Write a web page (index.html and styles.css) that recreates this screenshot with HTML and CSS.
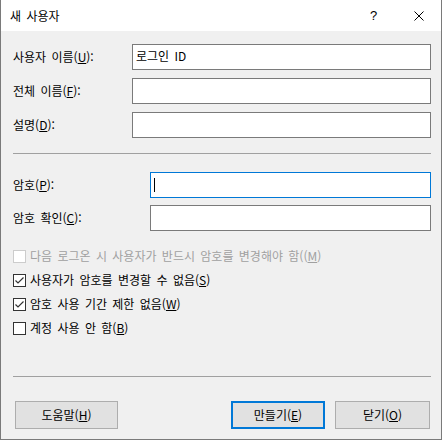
FILE: index.html
```html
<!DOCTYPE html>
<html lang="ko">
<head>
<meta charset="utf-8">
<title>새 사용자</title>
<link rel="stylesheet" href="styles.css">
</head>
<body>
<div class="window">
  <div class="titlebar">
    <span class="title">새 사용자</span>
    <span class="tb-btn help">?</span>
    <span class="tb-btn close">
      <svg width="10" height="10" viewBox="0 0 10 10"><path d="M0.5 0.5 L9.5 9.5 M9.5 0.5 L0.5 9.5" stroke="#000" stroke-width="1" fill="none"/></svg>
    </span>
  </div>
  <div class="content">
    <div class="form form-top">
      <label class="lbl">사용자 이름(<u>U</u>):</label>
      <div class="input"><span class="val">로그인 ID</span></div>
      <label class="lbl">전체 이름(<u>F</u>):</label>
      <div class="input"></div>
      <label class="lbl">설명(<u>D</u>):</label>
      <div class="input"></div>
    </div>
    <div class="sep sep-mid"></div>
    <div class="form form-pw">
      <label class="lbl">암호(<u>P</u>):</label>
      <div class="input focused"><span class="caret"></span></div>
      <label class="lbl">암호 확인(<u>C</u>):</label>
      <div class="input"></div>
    </div>
    <div class="checks">
      <div class="check disabled"><span class="box"></span><span>다음 로그온 시 사용자가 반드시 암호를 변경해야 함((<u>M</u>)</span></div>
      <div class="check"><span class="box"><svg width="11" height="11" viewBox="0 0 11 11"><polyline points="1.5,5.5 4,8 9.5,2.5" fill="none" stroke="#333" stroke-width="1.2"/></svg></span><span>사용자가 암호를 변경할 수 없음(<u>S</u>)</span></div>
      <div class="check"><span class="box"><svg width="11" height="11" viewBox="0 0 11 11"><polyline points="1.5,5.5 4,8 9.5,2.5" fill="none" stroke="#333" stroke-width="1.2"/></svg></span><span>암호 사용 기간 제한 없음(<u>W</u>)</span></div>
      <div class="check"><span class="box"></span><span>계정 사용 안 함(<u>B</u>)</span></div>
    </div>
    <div class="sep sep-bottom"></div>
    <div class="buttons">
      <button class="btn btn-help">도움말(<u>H</u>)</button>
      <span class="spacer"></span>
      <button class="btn btn-default">만들기(<u>E</u>)</button>
      <button class="btn btn-close">닫기(<u>O</u>)</button>
    </div>
  </div>
</div>
</body>
</html>
```
FILE: styles.css
```css
html, body {
  margin: 0;
  padding: 0;
  background: #ffffff;
}
body {
  font-family: "Noto Sans CJK KR", "Noto Sans", sans-serif;
  font-size: 12px;
  color: #000;
  word-spacing: 2px;
}
.window {
  width: 442px;
  height: 440px;
  box-sizing: border-box;
  border: 1px solid #7a7a7a;
  border-top: 0;
  background: #f0f0f0;
  display: flex;
  flex-direction: column;
}
.titlebar {
  height: 31px;
  background: #ffffff;
  display: flex;
  align-items: center;
}
.title {
  padding-left: 9px;
  line-height: 16px;
}
.tb-btn {
  height: 31px;
  display: flex;
  align-items: center;
  justify-content: center;
}
.help {
  margin-left: auto;
  width: 46px;
  padding-left: 3px;
  box-sizing: border-box;
  font-family: "Liberation Sans", sans-serif;
  font-size: 13px;
}
.close {
  width: 46px;
  padding-left: 2px;
  box-sizing: border-box;
}
.content {
  padding: 13px 10px 0 12px;
  display: flex;
  flex-direction: column;
}
.form {
  display: grid;
  align-items: center;
}
.form-top {
  grid-template-columns: 119px 1fr;
  grid-auto-rows: 26px;
  row-gap: 8px;
}
.form-pw {
  grid-template-columns: 137px 1fr;
  grid-auto-rows: 26px;
  row-gap: 7px;
}
.lbl {
  line-height: 16px;
}
.input {
  height: 26px;
  box-sizing: border-box;
  border: 1px solid #7a7a7a;
  background: #fff;
  display: flex;
  align-items: center;
  padding: 0 0 3px 3px;
}
.input.focused {
  border-color: #0078d7;
  padding: 0 0 0 3px;
}
.val {
  line-height: 16px;
}
.caret {
  width: 1px;
  height: 14px;
  background: #000;
}
.sep {
  height: 1px;
  background: #a0a0a0;
}
.sep-mid {
  margin: 15px 0 18px;
}
.checks {
  margin-top: 13px;
  display: flex;
  flex-direction: column;
}
.check {
  height: 24px;
  display: flex;
  align-items: center;
  gap: 4px;
  line-height: 16px;
}
.box {
  width: 13px;
  height: 13px;
  box-sizing: border-box;
  border: 1px solid #333;
  background: #fff;
  display: flex;
  align-items: center;
  justify-content: center;
}
.check.disabled {
  color: #a0a0a0;
}
.check.disabled .box {
  border-color: #cccccc;
}
.sep-bottom {
  margin-top: 36px;
}
.buttons {
  margin-top: 24px;
  display: flex;
  gap: 10px;
  padding: 0 1px 0 2px;
}
.spacer {
  flex: 1;
}
.btn {
  height: 28px;
  box-sizing: border-box;
  border: 1px solid #adadad;
  background: #e1e1e1;
  font-family: inherit;
  font-size: 12px;
  word-spacing: 2px;
  color: #000;
  padding: 0;
  margin: 0;
  line-height: 16px;
}
.btn-help {
  width: 103px;
}
.btn-default {
  width: 94px;
  border: 2px solid #0078d7;
}
.btn-close {
  width: 95px;
}
u {
  text-decoration-thickness: 1px;
  text-underline-offset: 1px;
}
```
